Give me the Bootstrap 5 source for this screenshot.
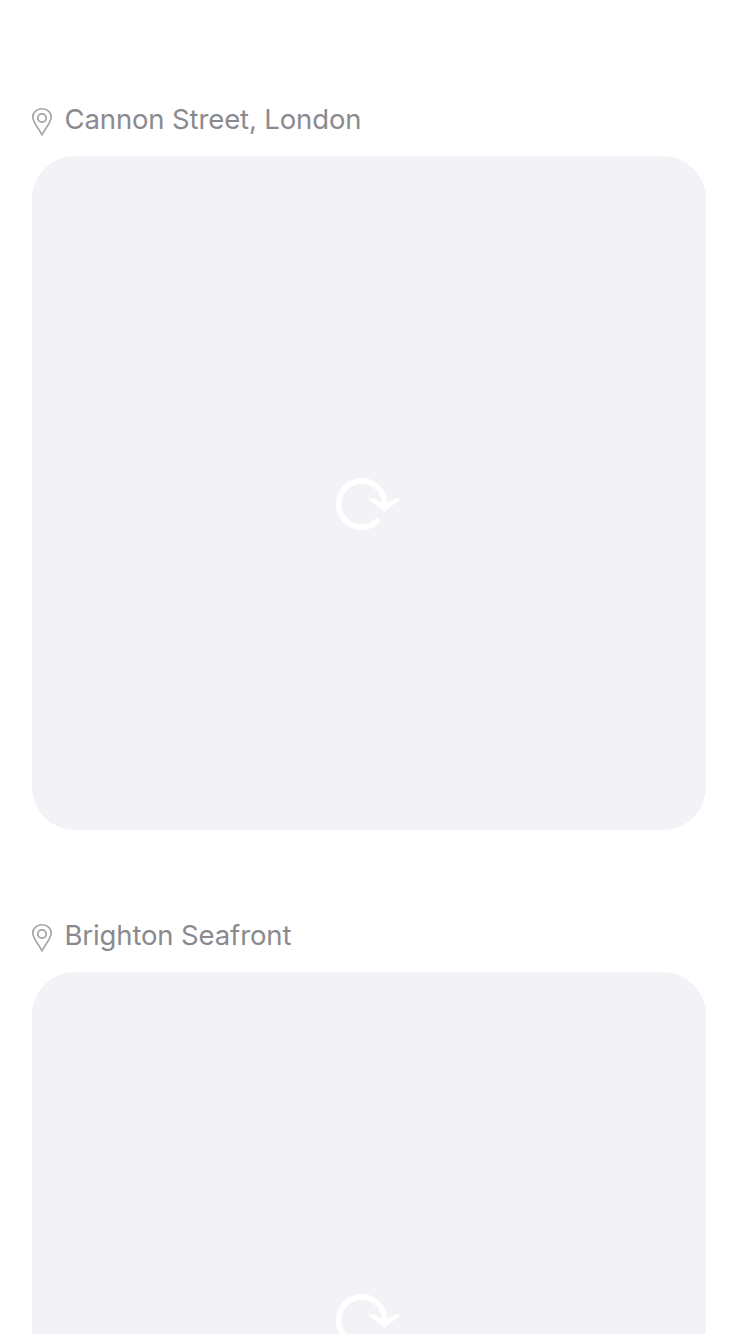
<!DOCTYPE html>
<html lang="en">
<head>
<meta charset="utf-8">
<meta name="viewport" content="width=device-width, initial-scale=1">
<title>Places</title>
<link href="https://cdn.jsdelivr.net/npm/bootstrap@5.3.0/dist/css/bootstrap.min.css" rel="stylesheet">
<style>
  body { font-family: Inter, "Liberation Sans", sans-serif; background: #fff; }
  .feed { height: 1334px; padding: 100px 44px 0 32px; gap: 86px; }
  .place { color: #8a8a8e; height: 40px; margin-bottom: 16px; }
  .place-name { font-size: 27.5px; line-height: 38px; margin-left: 12.5px; letter-spacing: -.13px; white-space: nowrap; }
  .pin { width: 20px; height: 30px; margin-top: 7px; }
  .photo { height: 674px; border-radius: 43px; background: #f2f2f7; }
  .reload { width: 68px; height: 54px; margin-top: 22px; }
</style>
</head>
<body>
<svg class="d-none" aria-hidden="true">
  <symbol id="pin" viewBox="0 0 20 30">
    <path d="M10 28C8.2 23.4 .8 15.6 .8 10.3C.8 5.1 4.9 1.7 10 1.7S19.2 5.1 19.2 10.3C19.2 15.6 11.8 23.4 10 28Z" fill="none" stroke="#a2a2a5" stroke-width="1.6" stroke-linejoin="round"/>
    <circle cx="10" cy="11" r="4.2" fill="none" stroke="#a2a2a5" stroke-width="1.8"/>
  </symbol>
  <symbol id="reload" viewBox="0 0 68 54">
    <path d="M43.8 42.4A23 23 0 1 1 49.6 27V31" fill="none" stroke="#fff" stroke-width="5.8"/>
    <path d="M32.3 21.3H39.8L46 25.4H52.5L59.3 21.6H66.5L49.5 35Z" fill="#fff"/>
  </symbol>
</svg>
<main class="feed d-flex flex-column overflow-hidden">
  <article>
    <header class="place d-flex align-items-start">
      <svg class="pin flex-shrink-0"><use href="#pin"/></svg>
      <span class="place-name">Cannon Street, London</span>
    </header>
    <div class="photo d-flex justify-content-center align-items-center">
      <svg class="reload"><use href="#reload"/></svg>
    </div>
  </article>
  <article>
    <header class="place d-flex align-items-start">
      <svg class="pin flex-shrink-0"><use href="#pin"/></svg>
      <span class="place-name">Brighton Seafront</span>
    </header>
    <div class="photo d-flex justify-content-center align-items-center">
      <svg class="reload"><use href="#reload"/></svg>
    </div>
  </article>
</main>
<script src="https://cdn.jsdelivr.net/npm/bootstrap@5.3.0/dist/js/bootstrap.bundle.min.js"></script>
</body>
</html>
